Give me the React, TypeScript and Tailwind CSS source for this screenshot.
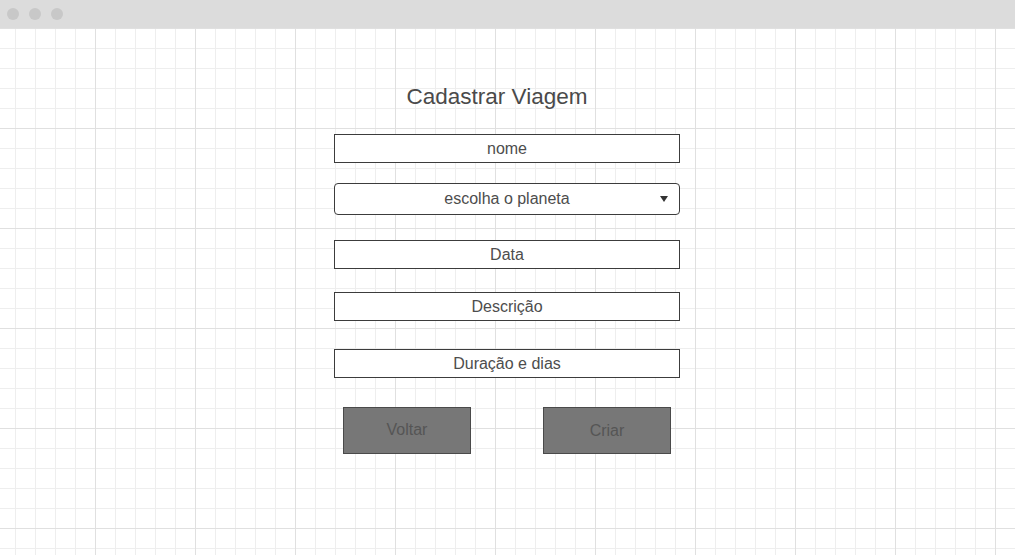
const fieldClass =
  'flex h-[29px] w-[346px] items-center justify-center border border-[#3c3c3c] bg-white text-[16px] text-[#4d4d4d]';

const buttonClass =
  'flex h-[47px] w-[128px] items-center justify-center border border-[#4a4a4a] bg-[#777777] text-[16px] text-[#555555]';

export default function App() {
  return (
    <div className="flex h-[555px] w-[1015px] flex-col overflow-hidden bg-white font-['Liberation_Sans',Arial,sans-serif]">
      {/* window chrome */}
      <div className="flex h-[28px] shrink-0 items-center gap-[10px] bg-[#dcdcdc] pl-[7px]">
        <span className="h-[12px] w-[12px] rounded-full bg-[#c8c8c8]" />
        <span className="h-[12px] w-[12px] rounded-full bg-[#c8c8c8]" />
        <span className="h-[12px] w-[12px] rounded-full bg-[#c8c8c8]" />
      </div>

      {/* grid canvas */}
      <div className="flex flex-1 flex-col items-center bg-white pr-[1px] [background-image:linear-gradient(to_right,#e0e0e0_1px,transparent_1px),linear-gradient(to_bottom,#e0e0e0_1px,transparent_1px),linear-gradient(to_right,#eeeeee_1px,transparent_1px),linear-gradient(to_bottom,#eeeeee_1px,transparent_1px)] [background-size:100px_100px,100px_100px,20px_20px,20px_20px] [background-position:95px_0,0_0,15px_0,0_0]">
        <h1 className="mt-[56px] w-[346px] pr-[20px] text-center text-[22.5px] leading-[26px] text-[#4a4a4a]">
          Cadastrar Viagem
        </h1>

        <div className={`${fieldClass} mt-[24px]`}>nome</div>

        <div className="relative mt-[20px] flex h-[32px] w-[346px] items-center justify-center rounded-[4px] border border-[#3c3c3c] bg-white text-[16px] text-[#4d4d4d]">
          escolha o planeta
          <svg
            className="absolute right-[11px] top-[12px]"
            width="8"
            height="6"
            viewBox="0 0 8 6"
          >
            <path d="M0 0 L8 0 L4 6 Z" fill="#333333" />
          </svg>
        </div>

        <div className={`${fieldClass} mt-[25px]`}>Data</div>
        <div className={`${fieldClass} mt-[23px]`}>Descrição</div>
        <div className={`${fieldClass} mt-[28px]`}>Duração e dias</div>

        <div className="mt-[29px] flex w-[328px] justify-between">
          <button className={`${buttonClass} pb-[2px]`}>Voltar</button>
          <button className={buttonClass}>Criar</button>
        </div>
      </div>
    </div>
  );
}
